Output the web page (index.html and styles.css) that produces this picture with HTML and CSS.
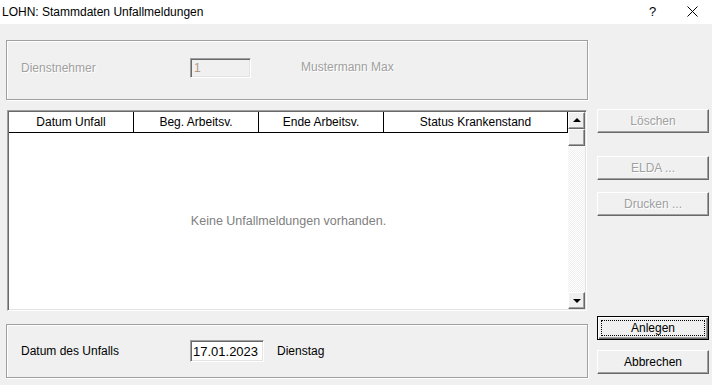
FILE: index.html
```html
<!DOCTYPE html>
<html lang="de">
<head>
    <meta charset="UTF-8">
    <meta name="viewport" content="width=device-width, initial-scale=1.0">
    <title>LOHN: Stammdaten Unfallmeldungen</title>
    <link rel="stylesheet" href="styles.css">
</head>
<body>
    <!-- Window title -->
    <div class="titlebar">
        <span class="title">LOHN: Stammdaten Unfallmeldungen</span>
        <span class="help">?</span>
        <span class="close">
            <svg width="11" height="11" viewBox="0 0 11 11">
                <path d="M0.5 0.5 L10.5 10.5 M10.5 0.5 L0.5 10.5" stroke="#000" stroke-width="1" fill="none"/>
            </svg>
        </span>
    </div>

    <div class="dialog">
        <div class="main">
            <!-- Employee -->
            <div class="group group-top">
                <span class="label disabled">Dienstnehmer</span>
                <span class="field field-small field-disabled">1</span>
                <span class="name disabled">Mustermann Max</span>
            </div>

            <!-- List of accident reports -->
            <div class="list">
                <div class="list-view">
                    <div class="list-header">
                        <div class="col">Datum Unfall</div>
                        <div class="col">Beg. Arbeitsv.</div>
                        <div class="col">Ende Arbeitsv.</div>
                        <div class="col col-wide">Status Krankenstand</div>
                    </div>
                    <div class="list-empty">Keine Unfallmeldungen vorhanden.</div>
                </div>
                <div class="scrollbar">
                    <div class="sb-btn"><span class="arrow-up"></span></div>
                    <div class="sb-btn"></div>
                    <div class="sb-track"></div>
                    <div class="sb-btn"><span class="arrow-down"></span></div>
                </div>
            </div>

            <!-- New entry -->
            <div class="group group-bottom">
                <span class="label">Datum des Unfalls</span>
                <span class="field field-date">17.01.2023</span>
                <span class="weekday">Dienstag</span>
            </div>
        </div>

        <div class="side">
            <button class="button" disabled>Löschen</button>
            <button class="button btn-elda" disabled>ELDA ...</button>
            <button class="button btn-print" disabled>Drucken ...</button>
            <button class="button btn-default"><span class="focus">Anlegen</span></button>
            <button class="button btn-cancel">Abbrechen</button>
        </div>
    </div>
</body>
</html>
```

FILE: styles.css
```css
* {
    box-sizing: border-box;
}

body {
    margin: 0;
    background-color: #f0f0f0;
    font-family: 'Liberation Sans', Arial, sans-serif;
    font-size: 12px;
    color: #000;
    width: 712px;
    height: 385px;
    overflow: hidden;
}

/* Title bar */
.titlebar {
    height: 24px;
    background-color: #fff;
    display: flex;
    align-items: center;
    padding: 0 0 1px 2px;
    font-family: 'Liberation Sans', Arial, sans-serif;
    font-size: 12px;
}

.title {
    flex: 1;
}

.help {
    width: 12px;
    margin-right: 26px;
    font-size: 13px;
}

.close {
    width: 11px;
    margin-right: 14px;
    display: flex;
    align-items: center;
}

/* Dialog body */
.dialog {
    display: flex;
    gap: 9px;
    padding: 16px 0 0 6px;
}

.main {
    width: 582px;
    display: flex;
    flex-direction: column;
}

.group {
    border: 1px solid #a0a0a0;
    box-shadow: inset 1px 1px 0 #fff, 1px 1px 0 #fff;
    display: flex;
    align-items: center;
    padding-left: 14px;
}

.group-top {
    height: 60px;
    padding-bottom: 4px;
}

.group-bottom {
    height: 54px;
    margin-top: 13px;
}

.label {
    width: 169px;
}

.disabled {
    color: #a0a0a0;
    text-shadow: 1px 1px 0 #fff;
}

.field {
    border: 1px solid #a0a0a0;
    border-right-color: #fff;
    border-bottom-color: #fff;
    box-shadow: inset 1px 1px 0 #696969, inset -1px -1px 0 #e3e3e3;
    display: flex;
    align-items: center;
    padding-left: 3px;
}

.field-small {
    width: 61px;
    height: 20px;
}

.field-disabled {
    background-color: #f0f0f0;
    color: #b49a7c;
}

.name {
    margin-left: 50px;
    margin-bottom: 3px;
}

.field-date {
    width: 74px;
    height: 22px;
    background-color: #fff;
    font-size: 13px;
    padding-left: 2px;
}

.weekday {
    margin-left: 13px;
}

/* List */
.list {
    margin-top: 10px;
    margin-left: 1px;
    width: 580px;
    height: 201px;
    display: flex;
    border: 1px solid #a0a0a0;
    border-right-color: #fff;
    border-bottom-color: #fff;
    box-shadow: inset 1px 1px 0 #696969, inset -1px -1px 0 #e3e3e3;
    padding: 1px;
    background-color: #fff;
}

.list-view {
    width: 559px;
    display: flex;
    flex-direction: column;
}

.list-header {
    display: flex;
    height: 21px;
    border-bottom: 1px solid #000;
}

.col {
    width: 125px;
    border-right: 1px solid #000;
    text-align: center;
    line-height: 20px;
}

.col-wide {
    width: 184px;
}

.list-empty {
    flex: 1;
    display: flex;
    align-items: center;
    justify-content: center;
    color: #808080;
    font-size: 12.5px;
}

.scrollbar {
    width: 17px;
    display: flex;
    flex-direction: column;
}

.sb-btn {
    height: 17px;
    background-color: #f0f0f0;
    border: 1px solid #fff;
    border-right-color: #696969;
    border-bottom-color: #696969;
    box-shadow: inset -1px -1px 0 #a0a0a0;
    display: flex;
    align-items: center;
    justify-content: center;
}

.sb-track {
    flex: 1;
    background-color: #fff;
    background-image: repeating-conic-gradient(#f0f0f0 0 25%, #fff 0 50%);
    background-size: 2px 2px;
}

.arrow-up {
    border-left: 4px solid transparent;
    border-right: 4px solid transparent;
    border-bottom: 4px solid #000;
    margin-bottom: 2px;
}

.arrow-down {
    border-left: 4px solid transparent;
    border-right: 4px solid transparent;
    border-top: 4px solid #000;
    margin-top: 1px;
}

/* Buttons */
.side {
    width: 112px;
    display: flex;
    flex-direction: column;
    padding: 69px 0 4px;
}

.button {
    height: 24px;
    width: 112px;
    margin: 0;
    padding: 0;
    font-family: 'Liberation Sans', Arial, sans-serif;
    font-size: 12px;
    color: #000;
    background-color: #f0f0f0;
    border: 1px solid #fff;
    border-right-color: #696969;
    border-bottom-color: #696969;
    box-shadow: inset -1px -1px 0 #a0a0a0;
    display: flex;
    align-items: center;
    justify-content: center;
}

.button:disabled {
    color: #a0a0a0;
    text-shadow: 1px 1px 0 #fff;
}

.btn-elda {
    margin-top: 23px;
}

.btn-print {
    margin-top: 12px;
}

.btn-default {
    margin-top: auto;
    border: 1px solid #000;
    box-shadow: inset 1px 1px 0 #fff, inset -1px -1px 0 #696969, inset -2px -2px 0 #a0a0a0;
    padding: 3px;
}

.focus {
    flex: 1;
    align-self: stretch;
    border: 1px dotted #000;
    display: flex;
    align-items: center;
    justify-content: center;
}

.btn-cancel {
    margin-top: 10px;
}
```
